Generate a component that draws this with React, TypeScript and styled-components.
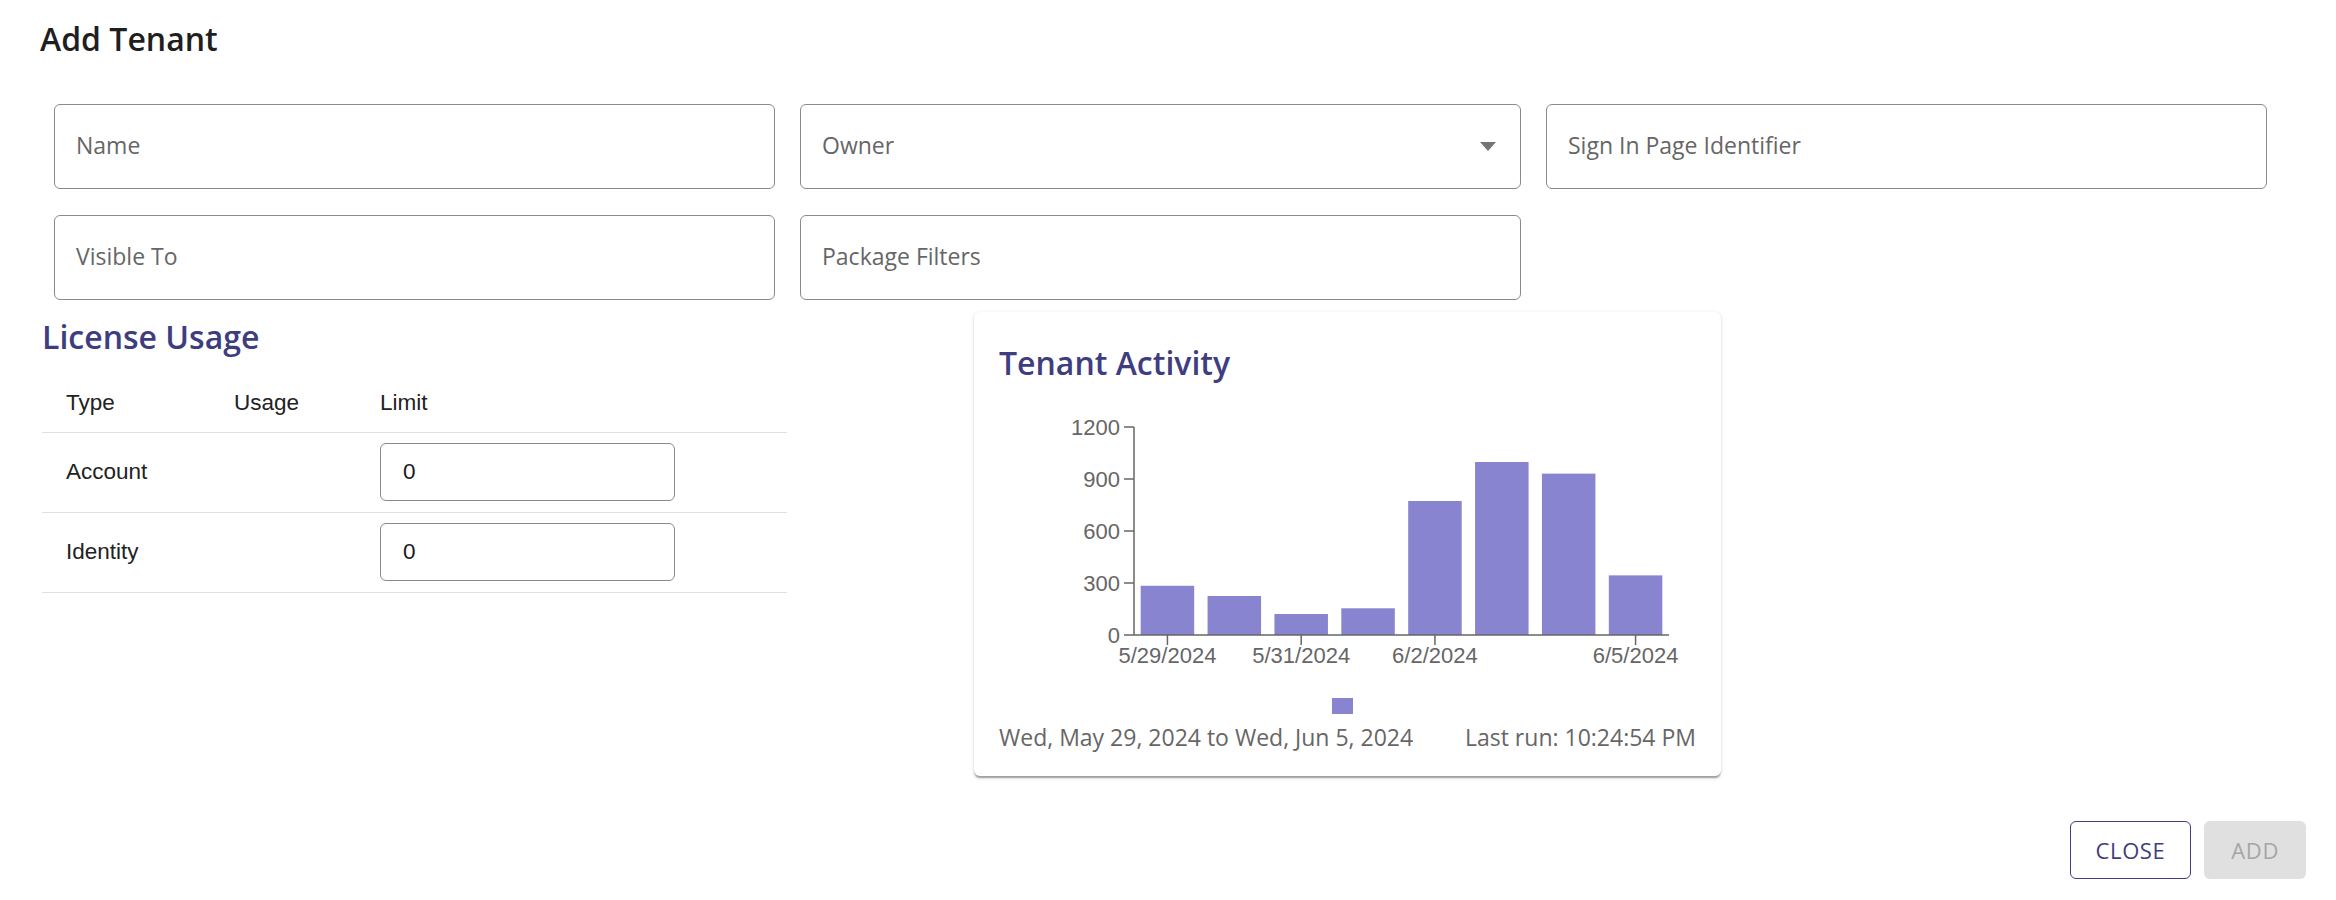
import React from "react";
import styled, { createGlobalStyle } from "styled-components";

const GlobalStyle = createGlobalStyle`
  html, body { margin: 0; padding: 0; background: #ffffff; }
  body { font-family: "Open Sans", "Liberation Sans", sans-serif; }
  *, *::before, *::after { box-sizing: border-box; }
`;

const INDIGO = "#3e3d80";

const Page = styled.div`
  width: 2336px;
  height: 900px;
  overflow: hidden;
  padding: 17px 30px 0 40px;
`;

const Title = styled.h1`
  margin: 0;
  font-size: 32px;
  font-weight: 600;
  line-height: 44px;
  color: #1f1f1f;
`;

const FieldGrid = styled.div`
  margin: 43px 0 0 14px;
  display: grid;
  grid-template-columns: repeat(3, 721px);
  column-gap: 25px;
  row-gap: 26px;
`;

const Field = styled.div`
  height: 85px;
  border: 1.5px solid #8a8a8a;
  border-radius: 6px;
  display: flex;
  align-items: center;
  justify-content: space-between;
  padding: 0 24px 0 21px;
`;

const FieldLabel = styled.span`
  font-size: 23px;
  color: #666666;
  line-height: 1;
  margin-top: -2px;
`;

const Lower = styled.div`
  display: flex;
  align-items: flex-start;
  margin-top: 12px;
`;

const LicenseSection = styled.section`
  width: 745px;
  margin-left: 2px;
`;

const SectionTitle = styled.h2<{ $top?: number }>`
  margin: ${(p) => p.$top ?? 0}px 0 0 0;
  font-size: 32px;
  font-weight: 600;
  line-height: 44px;
  color: ${INDIGO};
`;

const Table = styled.table`
  margin-top: 15px;
  width: 745px;
  table-layout: fixed;
  border-collapse: collapse;
  font-family: "Liberation Sans", Arial, sans-serif;
  font-size: 22.5px;
  color: #222222;
`;

const Th = styled.th<{ $w?: number }>`
  width: ${(p) => (p.$w ? `${p.$w}px` : "auto")};
  text-align: left;
  font-weight: 400;
  line-height: 30px;
  padding: 14px 24px;
  border-bottom: 1px solid #e0e0e0;
`;

const Td = styled.td`
  line-height: 30px;
  padding: 10.5px 24px;
  border-bottom: 1px solid #e0e0e0;
  vertical-align: middle;
`;

const LimitBox = styled.div`
  width: 295px;
  height: 58px;
  border: 1.5px solid #8a8a8a;
  border-radius: 6px;
  display: flex;
  align-items: center;
  padding-left: 22px;
  font-size: 22.5px;
  color: #1a1a1a;
`;

const Card = styled.div`
  margin-left: 187px;
  width: 747px;
  padding: 29px 25px 24px 25px;
  border-radius: 6px;
  background: #fff;
  box-shadow: 0px 3px 1.5px -1.5px rgba(0, 0, 0, 0.2),
    0px 1.5px 1.5px 0px rgba(0, 0, 0, 0.14),
    0px 1.5px 4.5px 0px rgba(0, 0, 0, 0.12);
`;

const ChartSvg = styled.svg`
  display: block;
  font-family: "Liberation Sans", Arial, sans-serif;
`;

const Legend = styled.div`
  margin-top: 23px;
  display: flex;
  justify-content: center;
  padding-right: 10px;
`;

const LegendSwatch = styled.span`
  width: 21px;
  height: 16px;
  background: #8884d0;
`;

const Footer = styled.div`
  margin-top: 8px;
  display: flex;
  justify-content: space-between;
  font-size: 23px;
  line-height: 30px;
  color: #666666;
`;

const ButtonRow = styled.div`
  margin-top: 45px;
  display: flex;
  justify-content: flex-end;
  align-items: center;
  gap: 13px;
`;

const Button = styled.button<{ $variant: "outlined" | "disabled" }>`
  height: 58px;
  padding: 0 ${(p) => (p.$variant === "outlined" ? 25 : 27)}px;
  border-radius: 6px;
  font-family: "Open Sans", sans-serif;
  font-size: 22px;
  font-weight: 500;
  letter-spacing: 0.6px;
  text-transform: uppercase;
  cursor: pointer;
  border: ${(p) => (p.$variant === "outlined" ? `1.5px solid ${INDIGO}` : "none")};
  background: ${(p) => (p.$variant === "outlined" ? "#ffffff" : "#e0e0e0")};
  color: ${(p) => (p.$variant === "outlined" ? INDIGO : "#a6a6a6")};
`;

const DropArrow = () => (
  <svg width="16" height="9" viewBox="0 0 16 9">
    <polygon points="0,0 16,0 8,9" fill="#757575" />
  </svg>
);

const values = [284, 225, 121, 154, 773, 998, 931, 344];
const xLabels: Record<number, string> = {
  0: "5/29/2024",
  2: "5/31/2024",
  4: "6/2/2024",
  7: "6/5/2024",
};

const AXIS_X = 135;
const AXIS_END = 670;
const BASE_Y = 250;
const TOP_Y = 42;
const STEP = (AXIS_END - AXIS_X) / 8;
const BAR_W = STEP * 0.8;
const yOf = (v: number) => BASE_Y - (v * (BASE_Y - TOP_Y)) / 1200;

const ActivityChart = () => (
  <ChartSvg width="697" height="290" viewBox="0 0 697 290">
    {values.map((v, i) => {
      const x = AXIS_X + STEP * 0.1 + i * STEP;
      return (
        <rect key={i} x={x} y={yOf(v)} width={BAR_W} height={BASE_Y - yOf(v)} fill="#8884d0" />
      );
    })}
    <line x1={AXIS_X} y1={TOP_Y} x2={AXIS_X} y2={BASE_Y} stroke="#666" strokeWidth="1.5" />
    <line x1={AXIS_X} y1={BASE_Y} x2={AXIS_END} y2={BASE_Y} stroke="#666" strokeWidth="1.5" />
    {[0, 300, 600, 900, 1200].map((t) => (
      <g key={t}>
        <line x1={AXIS_X - 10} y1={yOf(t)} x2={AXIS_X} y2={yOf(t)} stroke="#666" strokeWidth="1.5" />
        <text x={AXIS_X - 14} y={yOf(t)} dy="0.36em" textAnchor="end" fontSize="22" fill="#666">
          {t}
        </text>
      </g>
    ))}
    {Object.entries(xLabels).map(([k, label]) => {
      const cx = AXIS_X + STEP * 0.1 + Number(k) * STEP + BAR_W / 2;
      return (
        <g key={k}>
          <line x1={cx} y1={BASE_Y} x2={cx} y2={BASE_Y + 10} stroke="#666" strokeWidth="1.5" />
          <text x={cx} y={278} textAnchor="middle" fontSize="22" fill="#666">
            {label}
          </text>
        </g>
      );
    })}
  </ChartSvg>
);

export default function App() {
  return (
    <>
      <GlobalStyle />
      <Page>
        <Title>Add Tenant</Title>
        <FieldGrid>
          <Field>
            <FieldLabel>Name</FieldLabel>
          </Field>
          <Field>
            <FieldLabel>Owner</FieldLabel>
            <DropArrow />
          </Field>
          <Field>
            <FieldLabel>Sign In Page Identifier</FieldLabel>
          </Field>
          <Field>
            <FieldLabel>Visible To</FieldLabel>
          </Field>
          <Field>
            <FieldLabel>Package Filters</FieldLabel>
          </Field>
        </FieldGrid>
        <Lower>
          <LicenseSection>
            <SectionTitle $top={2.5}>License Usage</SectionTitle>
            <Table>
              <thead>
                <tr>
                  <Th $w={168}>Type</Th>
                  <Th $w={146}>Usage</Th>
                  <Th>Limit</Th>
                </tr>
              </thead>
              <tbody>
                {["Account", "Identity"].map((t) => (
                  <tr key={t}>
                    <Td>{t}</Td>
                    <Td />
                    <Td>
                      <LimitBox>0</LimitBox>
                    </Td>
                  </tr>
                ))}
              </tbody>
            </Table>
          </LicenseSection>
          <Card>
            <SectionTitle>Tenant Activity</SectionTitle>
            <ActivityChart />
            <Legend>
              <LegendSwatch />
            </Legend>
            <Footer>
              <span>Wed, May 29, 2024 to Wed, Jun 5, 2024</span>
              <span>Last run: 10:24:54 PM</span>
            </Footer>
          </Card>
        </Lower>
        <ButtonRow>
          <Button $variant="outlined">Close</Button>
          <Button $variant="disabled">Add</Button>
        </ButtonRow>
      </Page>
    </>
  );
}
